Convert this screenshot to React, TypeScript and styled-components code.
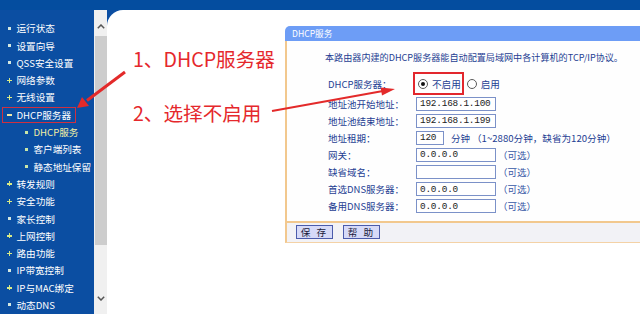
import React from "react";
import styled, { createGlobalStyle } from "styled-components";

// Types -------------------------------------------------------------------------

type BulletKind = "dot" | "plus" | "minus";

interface MenuEntry {
  label: string;
  bullet: BulletKind;
  sub?: boolean;
  active?: boolean;
  boxed?: boolean;
}

interface FieldEntry {
  label: string;
  value: string;
  optional?: boolean;
}

// Data --------------------------------------------------------------------------

const menu: MenuEntry[] = [
  { label: "运行状态", bullet: "dot" },
  { label: "设置向导", bullet: "dot" },
  { label: "QSS安全设置", bullet: "dot" },
  { label: "网络参数", bullet: "plus" },
  { label: "无线设置", bullet: "plus" },
  { label: "DHCP服务器", bullet: "minus", boxed: true },
  { label: "DHCP服务", bullet: "dot", sub: true, active: true },
  { label: "客户端列表", bullet: "dot", sub: true },
  { label: "静态地址保留", bullet: "dot", sub: true },
  { label: "转发规则", bullet: "plus" },
  { label: "安全功能", bullet: "plus" },
  { label: "家长控制", bullet: "dot" },
  { label: "上网控制", bullet: "plus" },
  { label: "路由功能", bullet: "plus" },
  { label: "IP带宽控制", bullet: "dot" },
  { label: "IP与MAC绑定", bullet: "plus" },
  { label: "动态DNS", bullet: "dot" },
];

const optionalFields: FieldEntry[] = [
  { label: "网关：", value: "0.0.0.0", optional: true },
  { label: "缺省域名：", value: "", optional: true },
  { label: "首选DNS服务器：", value: "0.0.0.0", optional: true },
  { label: "备用DNS服务器：", value: "0.0.0.0", optional: true },
];

// Component ---------------------------------------------------------------------

const App: React.FC = () => {
  return (
    <>
      <GlobalStyle />
      <Page>
        <TopBar />
        <Sidebar>
          {menu.map((item) => (
            <MenuRow key={item.label} $sub={item.sub}>
              <MenuEntryBox $boxed={item.boxed}>
                <Bullet $kind={item.bullet} $sub={item.sub} />
                <MenuText $active={item.active}>{item.label}</MenuText>
              </MenuEntryBox>
            </MenuRow>
          ))}
        </Sidebar>
        <ScrollBar>
          <ScrollButton $top>
            <svg width="8" height="5" viewBox="0 0 8 5">
              <polyline points="0.8,4.2 4,1 7.2,4.2" fill="none" stroke="#555" strokeWidth="1.5" />
            </svg>
          </ScrollButton>
          <Thumb />
          <Track />
          <ScrollButton>
            <svg width="8" height="5" viewBox="0 0 8 5">
              <polyline points="0.8,0.8 4,4 7.2,0.8" fill="none" stroke="#555" strokeWidth="1.5" />
            </svg>
          </ScrollButton>
        </ScrollBar>
        <Main>
          <Notes>
            <Note>1、DHCP服务器</Note>
            <Note>2、选择不启用</Note>
          </Notes>
          <Panel>
            <PanelTitle>DHCP服务</PanelTitle>
            <PanelBody>
              <Form>
                <Description>
                  本路由器内建的DHCP服务器能自动配置局域网中各计算机的TCP/IP协议。
                </Description>
                <RadioRow>
                  <Label>DHCP服务器：</Label>
                  <RadioGroup>
                    <Highlight>
                      <Radio $checked />
                      <RadioText>不启用</RadioText>
                    </Highlight>
                    <Radio />
                    <RadioText>启用</RadioText>
                  </RadioGroup>
                </RadioRow>
                <FieldRow>
                  <Label>地址池开始地址：</Label>
                  <TextBox readOnly value="192.168.1.100" />
                </FieldRow>
                <FieldRow>
                  <Label>地址池结束地址：</Label>
                  <TextBox readOnly value="192.168.1.199" />
                </FieldRow>
                <FieldRow>
                  <Label>地址租期：</Label>
                  <TextBox readOnly value="120" $short />
                  <Unit>分钟</Unit>
                  <Hint>（1~2880分钟，缺省为120分钟）</Hint>
                </FieldRow>
                {optionalFields.map((f) => (
                  <FieldRow key={f.label}>
                    <Label>{f.label}</Label>
                    <TextBox readOnly value={f.value} />
                    {f.optional && <Optional>（可选）</Optional>}
                  </FieldRow>
                ))}
              </Form>
              <ButtonBar>
                <Button>保 存</Button>
                <Button>帮 助</Button>
              </ButtonBar>
            </PanelBody>
          </Panel>
        </Main>
        <Arrows width="640" height="314" viewBox="0 0 640 314">
          <line x1="125" y1="72" x2="87" y2="100.5" stroke="#e32a2a" strokeWidth="3" />
          <polygon points="77,108 89,106 82,97" fill="#e32a2a" />
          <line x1="272" y1="111" x2="383" y2="91" stroke="#e32a2a" strokeWidth="2" />
          <polygon points="395,89 382,95.6 380.6,87.4" fill="#e32a2a" />
        </Arrows>
      </Page>
    </>
  );
};

export default App;

// Styled ------------------------------------------------------------------------

const GlobalStyle = createGlobalStyle`
  html, body {
    margin: 0;
    padding: 0;
  }
  body {
    width: 640px;
    height: 314px;
    overflow: hidden;
    background: #0b4ea2;
  }
`;

const Page = styled.div`
  position: relative;
  width: 640px;
  height: 314px;
  overflow: hidden;
  display: grid;
  grid-template-columns: 94px 13px 1fr;
  grid-template-rows: 10px 1fr;
  background: #0b4ea2;
  font-family: "Noto Sans CJK SC", sans-serif;
`;

const TopBar = styled.div`
  grid-column: 1 / -1;
  background: #044d9f;
`;

const Sidebar = styled.div`
  padding-top: 9.6px;
`;

const MenuRow = styled.div<{ $sub?: boolean }>`
  height: 17.3px;
  display: flex;
  align-items: center;
  padding-left: ${(p) => (p.$sub ? "19px" : "2px")};
`;

const MenuEntryBox = styled.div<{ $boxed?: boolean }>`
  display: flex;
  align-items: center;
  height: 16px;
  box-sizing: border-box;
  padding: 0 4px 0 4px;
  border: 1.5px solid ${(p) => (p.$boxed ? "#cf3040" : "transparent")};
`;

const Bullet = styled.span<{ $kind: BulletKind; $sub?: boolean }>`
  position: relative;
  width: 5px;
  height: 5px;
  margin-right: 4.5px;
  flex: none;
  &::before,
  &::after {
    content: "";
    position: absolute;
    background: ${(p) =>
      p.$kind === "plus" ? "#d8ea86" : p.$kind === "minus" ? "#f2eaa8" : p.$sub ? "#c8e6a8" : "#d4e8e0"};
  }
  &::before {
    ${(p) =>
      p.$kind === "dot"
        ? "left: 1px; top: 1px; width: 3px; height: 3px;"
        : p.$kind === "minus"
        ? "left: 0; top: 1.5px; width: 5px; height: 2px;"
        : "left: 0; top: 2px; width: 5px; height: 1.4px;"}
  }
  &::after {
    ${(p) => (p.$kind === "plus" ? "left: 1.8px; top: 0; width: 1.4px; height: 5px;" : "display: none;")}
  }
`;

const MenuText = styled.span<{ $active?: boolean }>`
  font-size: 9.6px;
  line-height: 12px;
  white-space: nowrap;
  color: ${(p) => (p.$active ? "#f3f0a2" : "#ffffff")};
`;

const ScrollBar = styled.div`
  display: flex;
  flex-direction: column;
  background: #f0f0f0;
`;

const ScrollButton = styled.div<{ $top?: boolean }>`
  height: ${(p) => (p.$top ? "26px" : "32px")};
  display: flex;
  justify-content: center;
  align-items: ${(p) => (p.$top ? "flex-end" : "center")};
  padding-bottom: ${(p) => (p.$top ? "7px" : "0")};
  box-sizing: border-box;
`;

const Thumb = styled.div`
  height: 209px;
  margin-left: 1px;
  background: #cdcdcd;
`;

const Track = styled.div`
  flex: 1;
`;

const Main = styled.div`
  display: flex;
  align-items: flex-start;
  padding-top: 16px;
  background: #ffffff;
  border-top-left-radius: 16px;
  overflow: hidden;
`;

const Notes = styled.div`
  flex: none;
  width: 178px;
  box-sizing: border-box;
  padding: 21px 0 0 26px;
  display: flex;
  flex-direction: column;
  gap: 30px;
`;

const Note = styled.div`
  font-size: 19.6px;
  line-height: 24px;
  color: #e5282c;
  white-space: nowrap;
`;

const Panel = styled.div`
  flex: none;
  width: 420px;
`;

const PanelTitle = styled.div`
  height: 15px;
  line-height: 15px;
  padding-left: 7px;
  background: #6d9df6;
  border-top-left-radius: 5px;
  color: #ffffff;
  font-size: 8.6px;
`;

const PanelBody = styled.div`
  border-left: 2px solid #f2c88e;
  border-bottom: 1px solid #f4d2a6;
  background: #fefefe;
`;

const Form = styled.div`
  padding: 8px 0 6.3px 41px;
  color: #1e3f93;
  font-size: 9.5px;
`;

const Description = styled.div`
  height: 16px;
  line-height: 16px;
  margin-left: -3px;
  font-size: 9.1px;
  white-space: nowrap;
`;

const FieldRow = styled.div`
  display: flex;
  align-items: center;
  height: 17.1px;
  white-space: nowrap;
`;

const RadioRow = styled(FieldRow)`
  height: 23px;
  margin-top: 7px;
`;

const Label = styled.span`
  width: 88px;
  flex: none;
`;

const RadioGroup = styled.div`
  display: flex;
  align-items: center;
  margin-left: -3px;
`;

const Highlight = styled.div`
  display: flex;
  align-items: center;
  height: 23px;
  box-sizing: border-box;
  padding: 0 1px 0 3px;
  margin-right: 3px;
  border: 2px solid #e2272d;
`;

const Radio = styled.span<{ $checked?: boolean }>`
  position: relative;
  width: 10px;
  height: 10px;
  box-sizing: border-box;
  border-radius: 50%;
  border: 1px solid #5a5a5a;
  background: #ffffff;
  margin-right: 4px;
  &::after {
    content: "";
    display: ${(p) => (p.$checked ? "block" : "none")};
    position: absolute;
    left: 2px;
    top: 2px;
    width: 4px;
    height: 4px;
    border-radius: 50%;
    background: #111;
  }
`;

const RadioText = styled.span`
  font-size: 9.6px;
`;

const TextBox = styled.input<{ $short?: boolean }>`
  width: ${(p) => (p.$short ? "28px" : "80px")};
  height: 14px;
  box-sizing: border-box;
  margin: 0;
  padding: 0 0 0 3px;
  border: 1px solid #7b91c8;
  background: #ffffff;
  color: #222;
  font-family: "Liberation Mono", monospace;
  font-size: 9.4px;
  letter-spacing: -0.2px;
  outline: none;
`;

const Unit = styled.span`
  margin-left: 7px;
`;

const Hint = styled.span`
  margin-left: 2px;
  font-size: 9.6px;
`;

const Optional = styled.span`
  margin-left: 2px;
  color: #3657a6;
`;

const ButtonBar = styled.div`
  border-top: 2px solid #f2c88e;
  height: 19px;
  box-sizing: content-box;
  display: flex;
  align-items: center;
  gap: 10px;
  padding-left: 9px;
  background: #f2f2f6;
`;

const Button = styled.div`
  width: 37px;
  height: 14px;
  box-sizing: border-box;
  border: 1px solid #4b5bab;
  background: #d6daf8;
  color: #1b1b3c;
  font-size: 9.6px;
  line-height: 12px;
  text-align: center;
  letter-spacing: 2px;
  white-space: pre;
`;

const Arrows = styled.svg`
  position: absolute;
  left: 0;
  top: 0;
  pointer-events: none;
`;
